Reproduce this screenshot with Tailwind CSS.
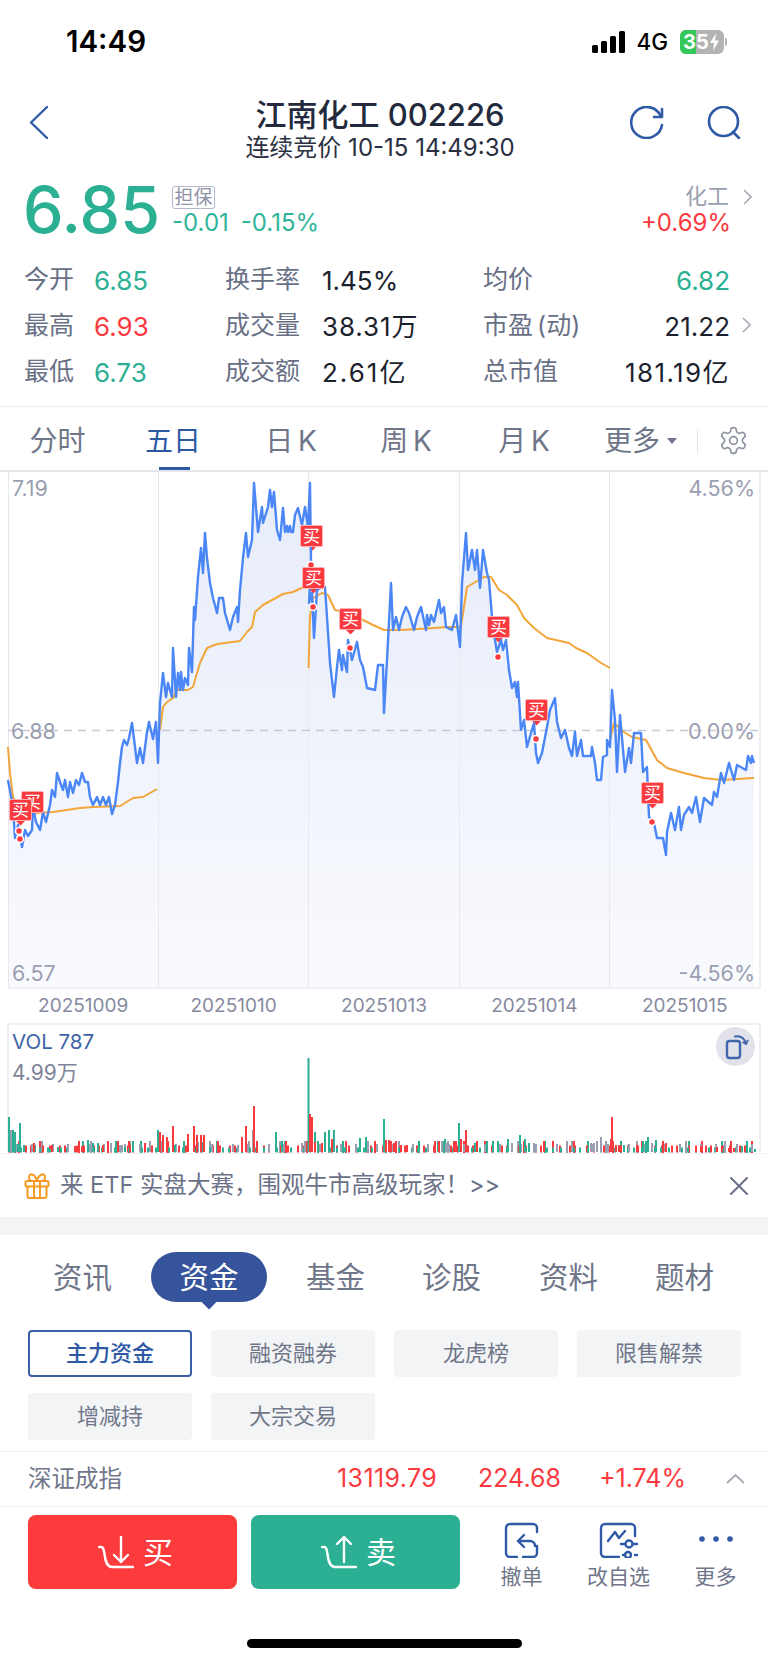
<!DOCTYPE html>
<html lang="zh-CN">
<head>
  <meta charset="UTF-8" />
  <meta name="viewport" content="width=device-width, initial-scale=1" />
  <title>江南化工 002226</title>
  <script src="https://cdn.jsdelivr.net/npm/@tailwindcss/browser@4"></script>
</head>
<body class="bg-white w-[768px] h-[1663px] overflow-hidden text-[#1f2536] [font-family:Inter,'Noto_Sans_CJK_SC',sans-serif]">

  <!-- status bar -->
  <div class="h-[84px] flex items-center pl-[66px] pr-[41px]">
    <span class="text-[29.500px] font-semibold text-black leading-none">14:49</span>
    <div class="ml-auto flex items-center">
      <svg width="33" height="22" viewBox="0 0 33 22" fill="#000">
        <rect x="0" y="14" width="6" height="8" rx="1.5"/><rect x="9" y="10" width="6" height="12" rx="1.5"/><rect x="18" y="5" width="6" height="17" rx="1.5"/><rect x="27" y="0" width="6" height="22" rx="1.5"/>
      </svg>
      <span class="ml-[11px] text-[22.500px] font-medium text-black leading-none">4G</span>
      <div class="ml-[12px] relative w-[44px] h-[24px] rounded-[6px] bg-[#b3b3b3] overflow-hidden flex items-center">
        <div class="absolute left-0 top-0 h-full w-[16px] bg-[#34c759]"></div>
        <span class="relative pl-[3px] text-[20px] font-bold text-white leading-none">35</span>
        <svg class="relative" width="11" height="18" viewBox="0 0 11 18" fill="#fff"><path d="M7 0 1 10h4l-1 8 6-10.500H6z"/></svg>
      </div>
      <div class="w-[2px] h-[8px] ml-[1px] bg-[#b3b3b3] rounded-r-sm"></div>
    </div>
  </div>

  <!-- header -->
  <div class="h-[78px] pt-[14px] flex">
    <div class="w-[160px] pl-[29px] pt-[8px]">
      <svg width="19" height="33" viewBox="0 0 19 33" fill="none" stroke="#2f5aa5" stroke-width="2.4" stroke-linecap="round" stroke-linejoin="round"><path d="M18 1 2 16.500 18 32"/></svg>
    </div>
    <div class="w-[440px] text-center">
      <div class="text-[31px] leading-[34px] font-medium text-[#232a3d]">江南化工 002226</div>
      <div class="text-[24px] leading-[26px] mt-[3px] text-[#2a3042]">连续竞价 10-15 14:49:30</div>
    </div>
    <div class="flex-1 flex pl-[30px] pt-[8px] gap-[43px]">
      <svg width="34" height="33" viewBox="0 0 34 33" fill="none" stroke="#2f5aa5" stroke-width="2.6" stroke-linecap="round" stroke-linejoin="round"><path d="M31 10.500A15.500 15.500 0 1 0 32 19"/><path d="M32 3v8H24"/></svg>
      <svg width="34" height="33" viewBox="0 0 34 33" fill="none" stroke="#2f5aa5" stroke-width="2.6" stroke-linecap="round"><circle cx="16.500" cy="15.500" r="14.500"/><path d="m26 26 6 6"/></svg>
    </div>
  </div>

  <!-- last price -->
  <div class="h-[88px] pt-[16px] flex pl-[23px] pr-[16px]">
    <div class="text-[64.500px] leading-[64px] font-medium text-[#2bb094]">6.85</div>
    <div class="absolute left-[172px] mt-[8px]">
      <div class="w-[43px] h-[23px] border border-[#b4b6cc] rounded-[3px] text-[19px] leading-[21px] text-center text-[#8f93a8]">担保</div>
      <div class="mt-[2px] flex gap-[12px] text-[24px] leading-[24px] text-[#2fb599]"><span>-0.01</span><span>-0.15%</span></div>
    </div>
    <div class="ml-auto mt-[7px] text-right">
      <div class="flex items-center justify-end h-[23px] text-[22px] text-[#9a9fb0]">化工
        <svg class="ml-[14px]" width="9" height="16" viewBox="0 0 9 16" fill="none" stroke="#a6abb8" stroke-width="1.600"><path d="m1 1 7 7-7 7"/></svg>
      </div>
      <div class="mt-[3px] mr-[21px] text-[24px] leading-[24px] text-[#fb3a3f]">+0.69%</div>
    </div>
  </div>

  <!-- quote stats -->
  <div class="h-[157px] pt-[7px] pl-[24px] border-b border-[#eceef1] grid grid-cols-[201px_258px_247px] auto-rows-[46px] items-center text-[25px]">
    <div class="flex items-center"><span class="w-[70px] text-[#687086]">今开</span><span class="text-[26px] text-[#2bb094]">6.85</span></div>
    <div class="flex items-center"><span class="w-[97px] text-[#687086]">换手率</span><span class="text-[26px] text-[#1b1f2e]">1.45%</span></div>
    <div class="flex items-center justify-between"><span class="text-[#687086]">均价</span><span class="text-[26px] text-[#2bb094]">6.82</span></div>

    <div class="flex items-center"><span class="w-[70px] text-[#687086]">最高</span><span class="text-[26px] text-[#fb3a3f]">6.93</span></div>
    <div class="flex items-center"><span class="w-[97px] text-[#687086]">成交量</span><span class="text-[26px] tracking-[0.9px] text-[#1b1f2e]">38.31万</span></div>
    <div class="flex items-center justify-between relative"><span class="text-[#687086] [word-spacing:-3px]">市盈 (动)</span><span class="text-[26px] text-[#1b1f2e]">21.22</span>
      <svg class="absolute left-[259px] top-[10px]" width="9" height="16" viewBox="0 0 9 16" fill="none" stroke="#a6abb8" stroke-width="1.600"><path d="m1 1 7 7-7 7"/></svg>
    </div>

    <div class="flex items-center"><span class="w-[70px] text-[#687086]">最低</span><span class="text-[26px] text-[#2bb094]">6.73</span></div>
    <div class="flex items-center"><span class="w-[97px] text-[#687086]">成交额</span><span class="text-[26px] tracking-[2px] text-[#1b1f2e]">2.61亿</span></div>
    <div class="flex items-center justify-between"><span class="text-[#687086]">总市值</span><span class="text-[26px] tracking-[1.4px] text-[#1b1f2e]">181.19亿</span></div>
  </div>

  <!-- period tabs -->
  <div class="h-[63px] pt-[4px] flex items-center text-[28px] text-[#6f7689]">
    <div class="w-[115px] text-center">分时</div>
    <div class="w-[116px] h-full relative flex items-center justify-center text-[#2d59a4]">五日<div class="absolute bottom-0 left-[44px] w-[31px] h-[3px] bg-[#2d59a4]"></div></div>
    <div class="w-[120px] text-center [word-spacing:-3px]">日 K</div>
    <div class="w-[110px] text-center [word-spacing:-3px]">周 K</div>
    <div class="w-[126px] text-center [word-spacing:-3px]">月 K</div>
    <div class="pl-[17px] w-[110px] flex items-center">更多
      <svg class="ml-[7px]" width="10" height="6" viewBox="0 0 10 6" fill="#6f7689"><path d="M0 0h10L5 6z"/></svg>
    </div>
    <div class="w-px h-[24px] bg-[#e3e5ea]"></div>
    <svg class="ml-[20px]" width="31" height="31" viewBox="0 0 24 24" fill="none" stroke="#8d93a3" stroke-width="1.300"><path d="M12.220 2h-.44a2 2 0 0 0-2 2v.18a2 2 0 0 1-1 1.730l-.43.25a2 2 0 0 1-2 0l-.15-.08a2 2 0 0 0-2.730.73l-.22.38a2 2 0 0 0 .73 2.730l.15.1a2 2 0 0 1 1 1.720v.51a2 2 0 0 1-1 1.740l-.15.09a2 2 0 0 0-.73 2.730l.22.38a2 2 0 0 0 2.730.73l.15-.08a2 2 0 0 1 2 0l.43.25a2 2 0 0 1 1 1.730V20a2 2 0 0 0 2 2h.44a2 2 0 0 0 2-2v-.18a2 2 0 0 1 1-1.730l.43-.25a2 2 0 0 1 2 0l.15.08a2 2 0 0 0 2.730-.73l.22-.39a2 2 0 0 0-.73-2.730l-.15-.08a2 2 0 0 1-1-1.740v-.5a2 2 0 0 1 1-1.740l.15-.09a2 2 0 0 0 .73-2.730l-.22-.38a2 2 0 0 0-2.730-.73l-.15.08a2 2 0 0 1-2 0l-.43-.25a2 2 0 0 1-1-1.730V4a2 2 0 0 0-2-2z"/><circle cx="12" cy="12" r="3"/></svg>
  </div>

  <!-- price chart -->
  <div class="relative h-[519px] text-[21.500px] text-[#9a9eb1]">
    <svg class="block" width="768" height="519" viewBox="0 470 768 519" fill="none">
      <defs>
        <linearGradient id="areaFill" gradientUnits="userSpaceOnUse" x1="0" y1="480" x2="0" y2="989">
          <stop offset="0" stop-color="#e6ecf9"/>
          <stop offset="1" stop-color="#f9fafe"/>
        </linearGradient>
      </defs>
      <polygon fill="url(#areaFill)" points="8,989 8,780 13,807 15,838 18,825 22,847 25,830 28,836 32,830 33,807 36,822 40,830 43,812 46,822 50,805 52,790 55,797 57,773 60,782 63,790 65,780 68,797 70,782 73,793 76,780 79,785 82,773 85,782 88,782 90,797 93,805 97,797 100,805 103,797 106,805 109,797 112,814 115,805 118,782 120,763 122,747 124,740 127,745 129,738 132,723 135,747 137,763 140,748 143,763 147,732 149,722 153,739 156,722 158,763 160,703 163,673 166,697 168,683 172,697 173,648 176,697 178,673 180,690 181,672 183,690 185,678 188,685 189,648 192,672 194,607 195,620 198,577 201,548 203,573 205,533 207,558 210,583 213,598 217,613 219,598 223,598 225,613 230,630 233,617 237,607 238,622 240,590 243,558 246,533 248,557 252,540 254,483 258,532 262,507 263,523 268,507 270,490 272,507 274,492 277,530 280,540 283,508 285,532 287,526 288,532 290,526 291,532 293,532 295,515 298,508 302,525 305,507 308,527 310,483 311,563 309,603 312,593 314,638 317,590 322,587 325,587 327,617 330,663 334,697 337,667 339,650 342,670 343,655 347,672 348,640 352,660 357,642 360,660 363,667 367,688 375,690 378,665 383,665 384,713 387,660 391,583 393,630 396,617 399,630 402,617 406,607 409,613 414,630 417,617 421,607 426,630 427,615 429,625 431,615 434,622 436,613 439,600 441,613 444,607 446,627 452,630 456,615 460,647 462,583 466,533 468,570 472,550 475,570 477,550 480,588 483,550 487,573 489,580 492,617 495,640 497,652 501,640 503,650 506,640 509,670 512,688 515,682 517,697 518,682 521,730 524,720 527,747 531,733 534,723 536,753 538,763 542,753 547,727 550,710 555,698 557,722 561,738 565,730 569,748 572,756 575,732 577,756 581,740 583,756 591,756 592,747 595,763 597,780 601,780 603,757 607,755 607,740 610,747 612,690 615,720 617,772 620,715 625,772 629,748 631,763 634,733 641,733 643,772 647,767 649,817 654,823 657,838 663,838 666,855 667,832 671,813 675,830 679,807 681,830 684,815 689,807 692,813 696,797 700,822 704,798 712,805 714,792 717,797 721,773 724,783 729,763 734,780 737,765 746,770 748,756 751,763 752,756 754,763 754,989"/>
      <!-- frame and session dividers -->
      <path stroke="#e7e9ee" stroke-width="1" d="M8.500 470V989M158.500 470V989M308.500 470V989M459.500 470V989M609.500 470V989"/>
      <path stroke="#eef0f4" stroke-width="2" d="M8 988H760M760 470V989"/>
      <path stroke="#e4e6eb" stroke-width="2" d="M0 471H768"/>
      <path stroke="#c6c9d3" stroke-width="1.300" stroke-dasharray="8 6" d="M8 730.500H758"/>
      <!-- average price -->
      <g stroke="#f2a53a" stroke-width="2" stroke-linejoin="round">
        <polyline points="8,747 10,773 13,797 20,810 35,813 53,812 80,808 93,807 120,806 133,798 143,797 157,789"/>
        <polyline points="160,730 163,707 167,702 173,698 177,690 188,690 193,687 200,663 207,648 217,644 240,641 247,632 252,627 255,612 263,605 283,594 293,592 308,585"/>
        <polyline points="308.500,668 310,617 313,598 322,593 328,595 335,610 350,613 363,620 373,625 384,630 401,630 434,628 447,627 460,627"/>
        <polyline points="460,633 467,587 484,577 491,577 499,590 507,595 517,605 524,618 534,628 547,638 569,643 576,648 587,653 601,663 610,668"/>
        <polyline points="610,740 614,723 624,732 632,737 646,740 657,760 667,768 684,773 704,778 721,780 754,778"/>
      </g>
      <!-- last price -->
      <polyline stroke="#4a86f5" stroke-width="2.400" stroke-linejoin="round" points="8,780 13,807 15,838 18,825 22,847 25,830 28,836 32,830 33,807 36,822 40,830 43,812 46,822 50,805 52,790 55,797 57,773 60,782 63,790 65,780 68,797 70,782 73,793 76,780 79,785 82,773 85,782 88,782 90,797 93,805 97,797 100,805 103,797 106,805 109,797 112,814 115,805 118,782 120,763 122,747 124,740 127,745 129,738 132,723 135,747 137,763 140,748 143,763 147,732 149,722 153,739 156,722 158,763 160,703 163,673 166,697 168,683 172,697 173,648 176,697 178,673 180,690 181,672 183,690 185,678 188,685 189,648 192,672 194,607 195,620 198,577 201,548 203,573 205,533 207,558 210,583 213,598 217,613 219,598 223,598 225,613 230,630 233,617 237,607 238,622 240,590 243,558 246,533 248,557 252,540 254,483 258,532 262,507 263,523 268,507 270,490 272,507 274,492 277,530 280,540 283,508 285,532 287,526 288,532 290,526 291,532 293,532 295,515 298,508 302,525 305,507 308,527 310,483 311,563 309,603 312,593 314,638 317,590 322,587 325,587 327,617 330,663 334,697 337,667 339,650 342,670 343,655 347,672 348,640 352,660 357,642 360,660 363,667 367,688 375,690 378,665 383,665 384,713 387,660 391,583 393,630 396,617 399,630 402,617 406,607 409,613 414,630 417,617 421,607 426,630 427,615 429,625 431,615 434,622 436,613 439,600 441,613 444,607 446,627 452,630 456,615 460,647 462,583 466,533 468,570 472,550 475,570 477,550 480,588 483,550 487,573 489,580 492,617 495,640 497,652 501,640 503,650 506,640 509,670 512,688 515,682 517,697 518,682 521,730 524,720 527,747 531,733 534,723 536,753 538,763 542,753 547,727 550,710 555,698 557,722 561,738 565,730 569,748 572,756 575,732 577,756 581,740 583,756 591,756 592,747 595,763 597,780 601,780 603,757 607,755 607,740 610,747 612,690 615,720 617,772 620,715 625,772 629,748 631,763 634,733 641,733 643,772 647,767 649,817 654,823 657,838 663,838 666,855 667,832 671,813 675,830 679,807 681,830 684,815 689,807 692,813 696,797 700,822 704,798 712,805 714,792 717,797 721,773 724,783 729,763 734,780 737,765 746,770 748,756 751,763 752,756 754,763"/>
      <!-- trade points -->
      <g fill="#fb3a3f" stroke="#fff" stroke-width="1.500">
        <circle cx="19" cy="831" r="3.500"/><circle cx="20" cy="839" r="3.500"/><circle cx="311" cy="565" r="3.500"/><circle cx="313" cy="607" r="3.500"/><circle cx="350" cy="648" r="3.500"/><circle cx="498" cy="657" r="3.500"/><circle cx="536" cy="739" r="3.500"/><circle cx="652" cy="822" r="3.500"/>
      </g>
    </svg>

    <span class="absolute left-[12px] top-[6px] leading-[24px]">7.19</span>
    <span class="absolute left-[11px] top-[249px] leading-[24px]">6.88</span>
    <span class="absolute left-[12px] top-[491px] leading-[24px]">6.57</span>
    <span class="absolute right-[13px] top-[6px] leading-[24px]">4.56%</span>
    <span class="absolute right-[13px] top-[249px] leading-[24px]">0.00%</span>
    <span class="absolute right-[13px] top-[491px] leading-[24px]">-4.56%</span>

    <div class="absolute left-[21px] top-[321px] w-[23px] h-[22px] bg-[#fb3a3f] rounded-[2px] border border-white/60 text-white text-[17px] leading-[20px] text-center">买<div class="absolute left-[7px] top-[17px] w-[7px] h-[7px] rotate-45 bg-[#fb3a3f] -z-10"></div></div>
    <div class="absolute left-[9px] top-[329px] w-[23px] h-[22px] bg-[#fb3a3f] rounded-[2px] border border-white/60 text-white text-[17px] leading-[20px] text-center">买<div class="absolute left-[7px] top-[17px] w-[7px] h-[7px] rotate-45 bg-[#fb3a3f] -z-10"></div></div>
    <div class="absolute left-[300px] top-[55px] w-[23px] h-[22px] bg-[#fb3a3f] rounded-[2px] border border-white/60 text-white text-[17px] leading-[20px] text-center">买<div class="absolute left-[7px] top-[17px] w-[7px] h-[7px] rotate-45 bg-[#fb3a3f] -z-10"></div></div>
    <div class="absolute left-[302px] top-[97px] w-[23px] h-[22px] bg-[#fb3a3f] rounded-[2px] border border-white/60 text-white text-[17px] leading-[20px] text-center">买<div class="absolute left-[7px] top-[17px] w-[7px] h-[7px] rotate-45 bg-[#fb3a3f] -z-10"></div></div>
    <div class="absolute left-[339px] top-[138px] w-[23px] h-[22px] bg-[#fb3a3f] rounded-[2px] border border-white/60 text-white text-[17px] leading-[20px] text-center">买<div class="absolute left-[7px] top-[17px] w-[7px] h-[7px] rotate-45 bg-[#fb3a3f] -z-10"></div></div>
    <div class="absolute left-[487px] top-[146px] w-[23px] h-[22px] bg-[#fb3a3f] rounded-[2px] border border-white/60 text-white text-[17px] leading-[20px] text-center">买<div class="absolute left-[7px] top-[17px] w-[7px] h-[7px] rotate-45 bg-[#fb3a3f] -z-10"></div></div>
    <div class="absolute left-[525px] top-[229px] w-[23px] h-[22px] bg-[#fb3a3f] rounded-[2px] border border-white/60 text-white text-[17px] leading-[20px] text-center">买<div class="absolute left-[7px] top-[17px] w-[7px] h-[7px] rotate-45 bg-[#fb3a3f] -z-10"></div></div>
    <div class="absolute left-[641px] top-[312px] w-[23px] h-[22px] bg-[#fb3a3f] rounded-[2px] border border-white/60 text-white text-[17px] leading-[20px] text-center">买<div class="absolute left-[7px] top-[17px] w-[7px] h-[7px] rotate-45 bg-[#fb3a3f] -z-10"></div></div>
  </div>

  <!-- dates -->
  <div class="h-[34px] mx-[8px] grid grid-cols-5 items-center text-center text-[19px] text-[#858aa0]">
    <span>20251009</span><span>20251010</span><span>20251013</span><span>20251014</span><span>20251015</span>
  </div>

  <!-- volume -->
  <div class="relative h-[130px]">
    <svg class="block" width="768" height="130" viewBox="0 1023 768 130" fill="none">
      <path stroke="#eef0f4" stroke-width="2" d="M8 1024H760M8 1023V1152M760 1023V1152"/>
      <g stroke-width="2">
        <line x1="10" y1="1147" x2="755" y2="1147" stroke="#9a9eb1" stroke-width="12" stroke-dasharray="2 29 2 47 2 37"/>
        <line x1="14" y1="1147" x2="755" y2="1147" stroke="#2bb094" stroke-width="12" stroke-dasharray="2 23 2 41 2 31"/>
        <line x1="18" y1="1147" x2="755" y2="1147" stroke="#fb3a3f" stroke-width="12" stroke-dasharray="2 19 2 37 2 27"/>
        <line x1="8" y1="1149" x2="755" y2="1149" stroke="#fb3a3f" stroke-width="7" stroke-dasharray="2 5 2 8 2 3 2 10"/>
        <line x1="12" y1="1150" x2="755" y2="1150" stroke="#2bb094" stroke-width="5" stroke-dasharray="2 6 2 11 2 4"/>
        <line x1="16" y1="1148" x2="755" y2="1148" stroke="#9a9eb1" stroke-width="8" stroke-dasharray="2 13 2 19"/>
        <path stroke="#2bb094" d="M9 1152V1117M10.500 1152V1132M13 1152V1130M15 1152V1132M18 1152V1144M20 1152V1123M24 1152V1145M35 1152V1145M50 1152V1149M58 1152V1147M88 1152V1140M93 1152V1143M98 1152V1143M125 1152V1147M133 1152V1141M158 1152V1130M160 1152V1135M175 1152V1145M203 1152V1142M210 1152V1147M276 1152V1132M282 1152V1141M308.500 1152V1058M311 1152V1124M315 1152V1132M325 1152V1132M329 1152V1130M334 1152V1130M360 1152V1138M366 1152V1137M384 1152V1119M459 1152V1123M445 1152V1139M438 1152V1141M475 1152V1143M493 1152V1141M498 1152V1141M508 1152V1139M520 1152V1135M525 1152V1139M529 1152V1143M612 1152V1133M624 1152V1145M643 1152V1141M648 1152V1137M656 1152V1140M742 1152V1146M755 1152V1149"/>
        <path stroke="#9a9eb1" d="M11 1152V1130M111 1152V1143M120 1152V1145M122 1152V1145M150 1152V1141M173 1152V1143M198 1152V1142M238 1152V1145M253 1152V1130M302 1152V1143M305 1152V1141M442 1152V1141M446 1152V1143M466 1152V1136M512 1152V1143M534 1152V1143M572 1152V1141M591 1152V1143M594 1152V1143M597 1152V1141M601 1152V1137M606 1152V1141M652 1152V1143M752 1152V1147"/>
        <path stroke="#fb3a3f" d="M34 1152V1143M52 1152V1145M75 1152V1146M82 1152V1146M103 1152V1145M118 1152V1141M130 1152V1145M145 1152V1143M160 1152V1132M163 1152V1135M167 1152V1137M173 1152V1126M188 1152V1134M194 1152V1126M197 1152V1135M201 1152V1135M204 1152V1135M242 1152V1137M246 1152V1126M254 1152V1106M257 1152V1141M310 1152V1114M312 1152V1117M315 1152V1142M322 1152V1143M332 1152V1139M386 1152V1140M389 1152V1140M391 1152V1141M394 1152V1143M401 1152V1145M407 1152V1145M439 1152V1141M454 1152V1141M456 1152V1141M461 1152V1139M466 1152V1130M477 1152V1141M544 1152V1141M612 1152V1117M611 1152V1139M616 1152V1145M619 1152V1145M637 1152V1145M666 1152V1143M696 1152V1146M701 1152V1146M717 1152V1147M722 1152V1146M729 1152V1148M734 1152V1148"/>
      </g>
    </svg>
    <span class="absolute left-[12px] top-[7px] text-[20.500px] leading-[24px] text-[#3e64a8]">VOL 787</span>
    <span class="absolute left-[12px] top-[38px] text-[21px] leading-[24px] text-[#7f8498]">4.99万</span>
    <div class="absolute left-[716px] top-[4px] w-[39px] h-[39px] rounded-full bg-[#e2e2ea] flex items-center justify-center">
      <svg width="27" height="27" viewBox="0 0 27 27" fill="none" stroke="#3f65ad" stroke-width="2"><rect x="5" y="8" width="13" height="17" rx="2.500" stroke-width="2.400"/><path d="M13 3.500c5-1 9 1.500 11 6.500" stroke-linecap="round"/><path d="m20.500 9 3.500 2 2-4" stroke-width="1.800"/></svg>
    </div>
  </div>

  <!-- promo banner -->
  <div class="h-[64px] border-t border-[#f1f2f5] flex items-center pl-[24px] pr-[20px] text-[23.500px] text-[#6a7187]">
    <svg width="26" height="26" viewBox="0 0 26 26" fill="none" stroke="#f59a23" stroke-width="2" stroke-linejoin="round"><rect x="1.500" y="8" width="23" height="5.500" rx="1.500"/><path d="M3.500 13.500V23a2 2 0 0 0 2 2h15a2 2 0 0 0 2-2v-9.500M10 8v17M16 8v17"/><path d="M13 7.500C11 2 8.500 1 6.500 1.500S4.500 6 6.500 7.500M13 7.500C15 2 17.500 1 19.500 1.500s2 4.500 0 6"/></svg>
    <span class="ml-[10px] -mt-[2px]">来 ETF 实盘大赛，围观牛市高级玩家！&gt;&gt;</span>
    <svg class="ml-auto" width="18" height="18" viewBox="0 0 18 18" stroke="#6a7187" stroke-width="2" stroke-linecap="round"><path d="m1 1 16 16M17 1 1 17"/></svg>
  </div>
  <div class="h-[18px] bg-[#f3f4f6]"></div>

  <!-- info tabs -->
  <div class="h-[95px] pt-[17px] pl-[53px] flex items-start text-[29.500px] leading-[50px] text-[#6f7689]">
    <span>资讯</span>
    <div class="relative ml-[39px] w-[116px] h-[50px] rounded-full bg-[#36549b] text-white text-center">资金<div class="absolute left-[51px] top-[43px] w-[14px] h-[14px] bg-[#36549b] rotate-45 scale-75"></div></div>
    <span class="ml-[39px]">基金</span>
    <span class="ml-[57px]">诊股</span>
    <span class="ml-[58px]">资料</span>
    <span class="ml-[57px]">题材</span>
  </div>
  <div class="mx-[28px] grid grid-cols-[repeat(4,164px)] gap-x-[19px] gap-y-[16px] auto-rows-[47px] text-[22px] text-[#6f7689] text-center">
    <div class="rounded-[4px] border-2 border-[#3a5fa8] text-[#2e5aa5] font-medium flex items-center justify-center">主力资金</div>
    <div class="rounded-[4px] bg-[#f3f4f6] flex items-center justify-center">融资融券</div>
    <div class="rounded-[4px] bg-[#f3f4f6] flex items-center justify-center">龙虎榜</div>
    <div class="rounded-[4px] bg-[#f3f4f6] flex items-center justify-center">限售解禁</div>
    <div class="rounded-[4px] bg-[#f3f4f6] flex items-center justify-center">增减持</div>
    <div class="rounded-[4px] bg-[#f3f4f6] flex items-center justify-center">大宗交易</div>
  </div>

  <!-- index row -->
  <div class="mt-[11px] h-[56px] border-y border-[#eeeff2] pl-[28px] flex items-center text-[25px] text-[#fb3a3f]">
    <span class="w-[309px] text-[23.500px] text-[#6f7689]">深证成指</span>
    <span class="w-[141px] tracking-[0.4px]">13119.79</span>
    <span class="w-[121px]">224.68</span>
    <span class="w-[127px]">+1.74%</span>
    <svg width="19" height="10" viewBox="0 0 19 10" fill="none" stroke="#a6abb8" stroke-width="1.800"><path d="m1 9 8.500-8L18 9"/></svg>
  </div>

  <!-- actions -->
  <div class="pt-[8px] pl-[28px] flex items-start">
    <div class="w-[209px] h-[74px] rounded-[8px] bg-[#fe3b3c] flex items-center pl-[70px] text-white text-[30px]">
      <svg width="36" height="33" viewBox="0 0 36 33" fill="none" stroke="#fff" stroke-width="2.400" stroke-linecap="round" stroke-linejoin="round"><path d="M1 11h2c2 0 2.500 1 3.500 7 1 8 2.500 13 7.500 13h21"/><path d="M23 1v25M16 19l7 7 7-7"/></svg>
      <span class="ml-[9px]">买</span>
    </div>
    <div class="ml-[14px] w-[209px] h-[74px] rounded-[8px] bg-[#2bb094] flex items-center pl-[70px] text-white text-[30px]">
      <svg width="36" height="33" viewBox="0 0 36 33" fill="none" stroke="#fff" stroke-width="2.400" stroke-linecap="round" stroke-linejoin="round"><path d="M1 11h2c2 0 2.500 1 3.500 7 1 8 2.500 13 7.500 13h21"/><path d="M23 26V1M16 8l7-7 7 7"/></svg>
      <span class="ml-[9px]">卖</span>
    </div>
    <div class="ml-[13px] w-[97px] flex flex-col items-center text-[21px] text-[#6f7689]">
      <svg class="mt-[7px]" width="35" height="36" viewBox="0 0 35 36" fill="none" stroke="#2f5aa5" stroke-width="2.400" stroke-linecap="round" stroke-linejoin="round"><path d="M33 10V6a4 4 0 0 0-4-4H6a4 4 0 0 0-4 4v25a4 4 0 0 0 4 4h7M19 35h10a4 4 0 0 0 4-4V24"/><path d="m20 13-6 6 6 6M14 19h12a5 5 0 0 1 5 5"/></svg>
      <span class="mt-[6px] leading-[26px]">撤单</span>
    </div>
    <div class="w-[97px] flex flex-col items-center text-[21px] text-[#6f7689]">
      <svg class="mt-[7px]" width="40" height="36" viewBox="0 0 40 36" fill="none" stroke="#2f5aa5" stroke-width="2.400" stroke-linecap="round" stroke-linejoin="round"><path d="M36 14V6a4 4 0 0 0-4-4H6a4 4 0 0 0-4 4v25a4 4 0 0 0 4 4h14"/><path d="m9 19 7-9 4 6 6-7"/><path d="M22 22h4M34 22h4M26 33h-2M36 33h2"/><circle cx="30" cy="22" r="3.500"/><circle cx="29" cy="33" r="3"/></svg>
      <span class="mt-[6px] leading-[26px]">改自选</span>
    </div>
    <div class="w-[97px] flex flex-col items-center text-[21px] text-[#6f7689]">
      <svg class="mt-[7px]" width="36" height="36" viewBox="0 0 36 36" fill="#2f5aa5"><circle cx="4" cy="17" r="2.800"/><circle cx="18" cy="17" r="2.800"/><circle cx="32" cy="17" r="2.800"/></svg>
      <span class="mt-[6px] leading-[26px]">更多</span>
    </div>
  </div>

  <div class="mt-[49px] mx-auto w-[275px] h-[9px] rounded-full bg-black"></div>
</body>
</html>
